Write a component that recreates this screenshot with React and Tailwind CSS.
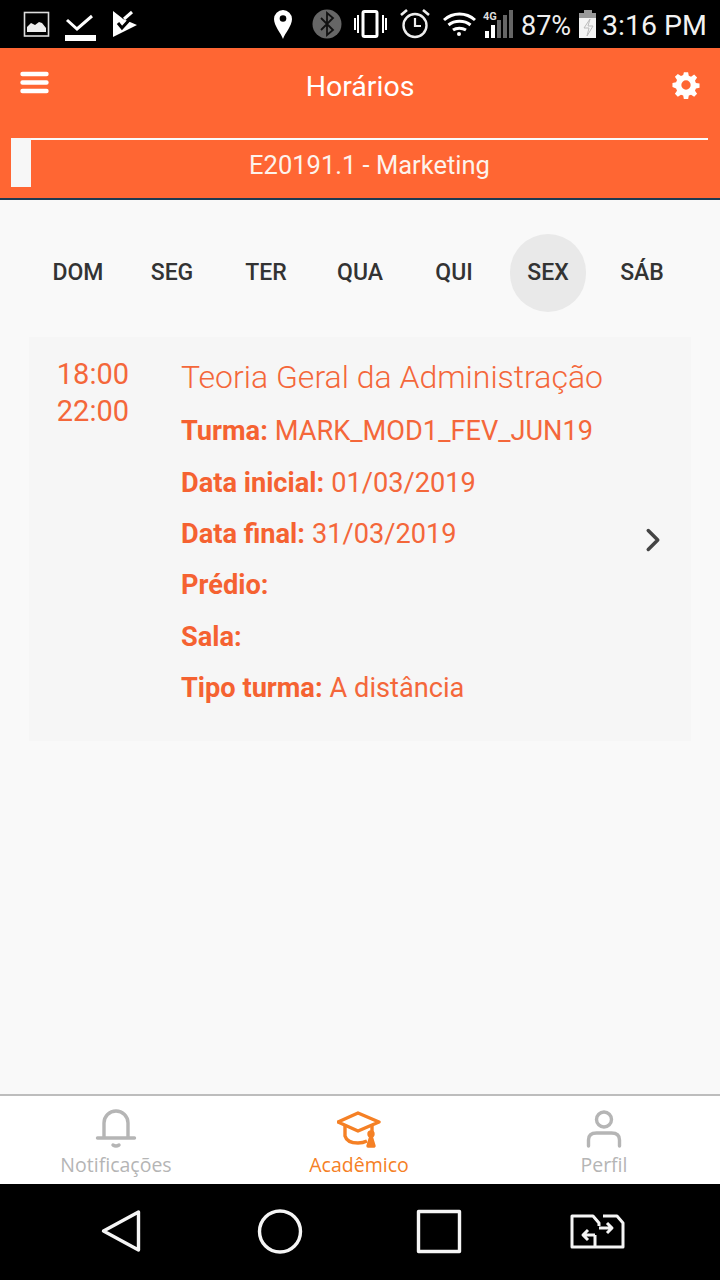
import React from 'react';
import { ChevronRight } from 'lucide-react';

const days = ['DOM', 'SEG', 'TER', 'QUA', 'QUI', 'SEX', 'SÁB'];

const rows = [
  { label: 'Turma:', value: 'MARK_MOD1_FEV_JUN19' },
  { label: 'Data inicial:', value: '01/03/2019' },
  { label: 'Data final:', value: '31/03/2019' },
  { label: 'Prédio:', value: '' },
  { label: 'Sala:', value: '' },
  { label: 'Tipo turma:', value: 'A distância' },
];

const StatusBar = () => (
  <div className="h-12 bg-black flex items-center text-white shrink-0 relative">
    <svg width="130" height="48" viewBox="0 0 130 48" className="shrink-0 ml-[20px]">
      <rect x="4.5" y="12.5" width="24" height="23.5" fill="none" stroke="#ddd" strokeWidth="1.6" />
      <path d="M7 32v-5l4-4 4 2 4-3 3 1 4 5v4z" fill="#eee" />
      <path d="M47 20l10 9 15-13" fill="none" stroke="#fff" strokeWidth="3" />
      <rect x="45" y="35" width="31" height="6" fill="#fff" />
      <path d="M93 11l9 7 1 1 14 6-24 12z" fill="#fff" />
      <path d="M98 23l4 5 10-11" fill="none" stroke="#000" strokeWidth="3" />
      <path d="M104 19l8-7" fill="none" stroke="#fff" strokeWidth="3" />
    </svg>
    <svg width="230" height="48" viewBox="273 0 230 48" className="shrink-0 ml-[123px]">
      <path d="M283 39c-2-6-9-13-9-20a9 9 0 0 1 18 0c0 7-7 14-9 20z" fill="#fff" />
      <circle cx="283" cy="18.5" r="3.3" fill="#000" />
      <circle cx="327" cy="24" r="14.5" fill="#666" />
      <path d="M321 18l12 12-6 5V13l6 5-12 12" fill="none" stroke="#111" strokeWidth="1.8" />
      <path d="M355 18v12M358 15v18M383 15v18M386 18v12" stroke="#fff" strokeWidth="2" />
      <rect x="363" y="11.5" width="14" height="25" rx="1.5" fill="none" stroke="#fff" strokeWidth="3" />
      <circle cx="415" cy="25.5" r="11.5" fill="none" stroke="#eee" strokeWidth="2.4" />
      <path d="M415 18v8h6" fill="none" stroke="#eee" strokeWidth="2.2" />
      <path d="M401 15l6-5M429 15l-6-5" stroke="#eee" strokeWidth="2.6" />
      <path d="M444 20c9-8 22-8 31 0M448.500 25c6-5 16-5 22 0M453 30c3.500-2.500 9-2.500 13 0" fill="none" stroke="#fff" strokeWidth="3" />
      <circle cx="459" cy="34" r="2" fill="#fff" />
      <text x="483" y="20" fontSize="11" fontWeight="700" fill="#ddd" fontFamily="Roboto, sans-serif">4G</text>
    </svg>
    <svg width="30" height="30" viewBox="0 0 30 30" className="absolute left-[484px] top-[9px]">
      <rect x="1" y="22" width="4" height="7" fill="#fff" />
      <rect x="7" y="16" width="4" height="13" fill="#fff" />
      <rect x="13" y="11" width="4" height="18" fill="#666" />
      <rect x="19" y="6" width="4" height="23" fill="#666" />
      <rect x="25" y="1" width="4" height="28" fill="#666" />
    </svg>
    <span className="absolute left-[521px] top-[10px] font-['Roboto',sans-serif] text-[27px] leading-8 text-[#eee]">87%</span>
    <svg width="18" height="30" viewBox="0 0 18 30" className="absolute left-[579px] top-[10px]">
      <rect x="5" y="0" width="8" height="3" fill="#999" />
      <rect x="0" y="3" width="17" height="5" fill="#999" />
      <rect x="0" y="8" width="17" height="20" fill="#f4f4f4" />
      <path d="M11 9l-6 9h5l-2 8 6-10h-5z" fill="none" stroke="#bbb" strokeWidth="1" />
    </svg>
    <span className="absolute left-[602px] top-[10px] font-['Roboto',sans-serif] text-[28.5px] leading-8 text-[#f2f2f2] whitespace-nowrap">3:16 PM</span>
  </div>
);

const Header = () => (
  <div className="h-[152px] bg-[#ff6633] border-b-2 border-[#1c3a52] shrink-0 flex flex-col text-white">
    <div className="h-[90px] flex items-start justify-between pl-5 pr-[20px] shrink-0 relative">
      <svg width="29" height="24" viewBox="0 0 29 24" className="mt-[23px]">
        <path d="M2.500 3h24M2.500 11.500h24M2.500 20h24" stroke="#fff" strokeWidth="4.400" strokeLinecap="round" />
      </svg>
      <span className="absolute left-0 right-0 top-[21px] text-center text-[28.5px] leading-9">Horários</span>
      <svg width="28" height="28" viewBox="0 0 24 24" className="mt-[23px]" fill="#fff">
        <path fillRule="evenodd" d="M10.200 1h3.600l.6 3.100 1.900.8 2.700-1.800 2.500 2.500-1.800 2.700.8 1.900 3.100.6v3.600l-3.100.6-.8 1.900 1.800 2.700-2.500 2.500-2.700-1.800-1.900.8-.6 3.100h-3.600l-.6-3.100-1.900-.8-2.700 1.800-2.500-2.500 1.800-2.700-.8-1.900L.4 13.800v-3.600l3.100-.6.8-1.900-1.800-2.700 2.500-2.500 2.700 1.800 1.900-.8zM12 8a4 4 0 1 0 0 8 4 4 0 0 0 0-8z" />
      </svg>
    </div>
    <div className="ml-[11px] mr-[12px] h-[49px] flex border-t-2 border-[#fafafa]">
      <div className="w-5 h-[49px] -mt-[2px] bg-[#f7f7f7] shrink-0" />
      <div className="flex-1 text-center text-[25.500px] leading-[50px] text-[#fdf3ec]">E20191.1 - Marketing</div>
    </div>
  </div>
);

const DayTabs = () => (
  <div className="grid grid-cols-7 w-[658px] mx-auto mt-[33px] h-20 items-center">
    {days.map((d) => (
      <div key={d} className="flex justify-center">
        <span className={`w-[76px] h-[78px] rounded-full flex items-center justify-center text-[23px] font-medium text-[#333] ${d === 'SEX' ? 'bg-[#e9e9e9]' : ''}`}>{d}</span>
      </div>
    ))}
  </div>
);

const ClassCard = () => (
  <div className="mx-[29px] mt-6 h-[404px] bg-[#f6f6f6] flex relative text-[#f4673a]">
    <div className="w-[152px] pt-[19px] pr-[52px] shrink-0 text-right text-[29px] leading-[37px] font-normal">
      <div>18:00</div>
      <div>22:00</div>
    </div>
    <div className="flex-1 pt-[20px]">
      <div className="text-[32px] leading-10 font-light mb-[9px] whitespace-nowrap">Teoria Geral da Administração</div>
      <div className="flex flex-col">
        {rows.map((r) => (
          <div key={r.label} className="h-[51.400px] flex items-center text-[27.200px] whitespace-nowrap">
            <span className="font-bold text-[#f56231] mr-[7px]">{r.label}</span>
            <span className="font-normal">{r.value}</span>
          </div>
        ))}
      </div>
    </div>
    <ChevronRight size={38} strokeWidth={2.2} className="absolute left-[605px] top-[184px] text-[#444]" />
  </div>
);

const BottomTabs = () => (
  <div className="h-[90px] bg-white border-t-2 border-[#bdbdbd] shrink-0 relative font-['Open_Sans',sans-serif] text-[19.500px]">
    <svg width="42" height="42" viewBox="0 0 42 42" fill="none" stroke="#b5b5b5" strokeWidth="3.400" strokeLinecap="round" className="absolute left-[95px] top-[12px]">
      <path d="M2.500 30h37M9 29V15a12 12 0 0 1 24 0v14" />
      <path d="M18 37q3 2 6 0" />
    </svg>
    <div className="absolute left-0 top-[57px] w-[232px] text-center text-[#b5b5b5] leading-6">Notificações</div>
    <svg width="44" height="38" viewBox="0 0 44 38" className="absolute left-[337px] top-[15px]" fill="none" stroke="#f58025" strokeWidth="3.400" strokeLinejoin="round">
      <path d="M21 2L42 11 21 20 1 11z" />
      <path d="M8 15v10q2 7 13 7 5 0 9-2M35 15v7" />
      <circle cx="34" cy="23" r="2" fill="#f58025" />
      <path d="M31 35l3-10 3 10z" fill="#f58025" />
    </svg>
    <div className="absolute left-[259px] top-[57px] w-[200px] text-center text-[#f58025] leading-6">Acadêmico</div>
    <svg width="36" height="42" viewBox="0 0 36 42" className="absolute left-[586px] top-[12px]" fill="none" stroke="#b5b5b5" strokeWidth="3.400" strokeLinecap="round">
      <circle cx="18" cy="11.500" r="7.500" />
      <path d="M2.500 38v-6q0-7 8-7h15q8 0 8 7v6" />
    </svg>
    <div className="absolute left-[504px] top-[57px] w-[200px] text-center text-[#b5b5b5] leading-6">Perfil</div>
  </div>
);

const NavBar = () => (
  <div className="h-24 bg-black shrink-0 flex items-start">
    <svg width="720" height="96" viewBox="0 0 720 96" fill="none" stroke="#f5f5f5" strokeWidth="3.400" strokeLinejoin="round">
      <path d="M138.500 28v38l-35-19z" />
      <circle cx="280" cy="47.500" r="20.500" />
      <rect x="418.500" y="27.500" width="41" height="40" />
      <path d="M599 42v-3l-6-7h-21v31h23v-12M603 32h14l6 7v24h-28" strokeWidth="3" />
      <path d="M599 44h13m-5-5l5 5-5 5M595 51h-12m5-5l-5 5 5 5" strokeWidth="3" />
    </svg>
  </div>
);

export default function App() {
  return (
    <div className="w-[720px] h-[1280px] bg-[#f9f9f9] flex flex-col overflow-hidden font-['Roboto',sans-serif]">
      <StatusBar />
      <Header />
      <div className="flex-1">
        <DayTabs />
        <ClassCard />
      </div>
      <BottomTabs />
      <NavBar />
    </div>
  );
}
